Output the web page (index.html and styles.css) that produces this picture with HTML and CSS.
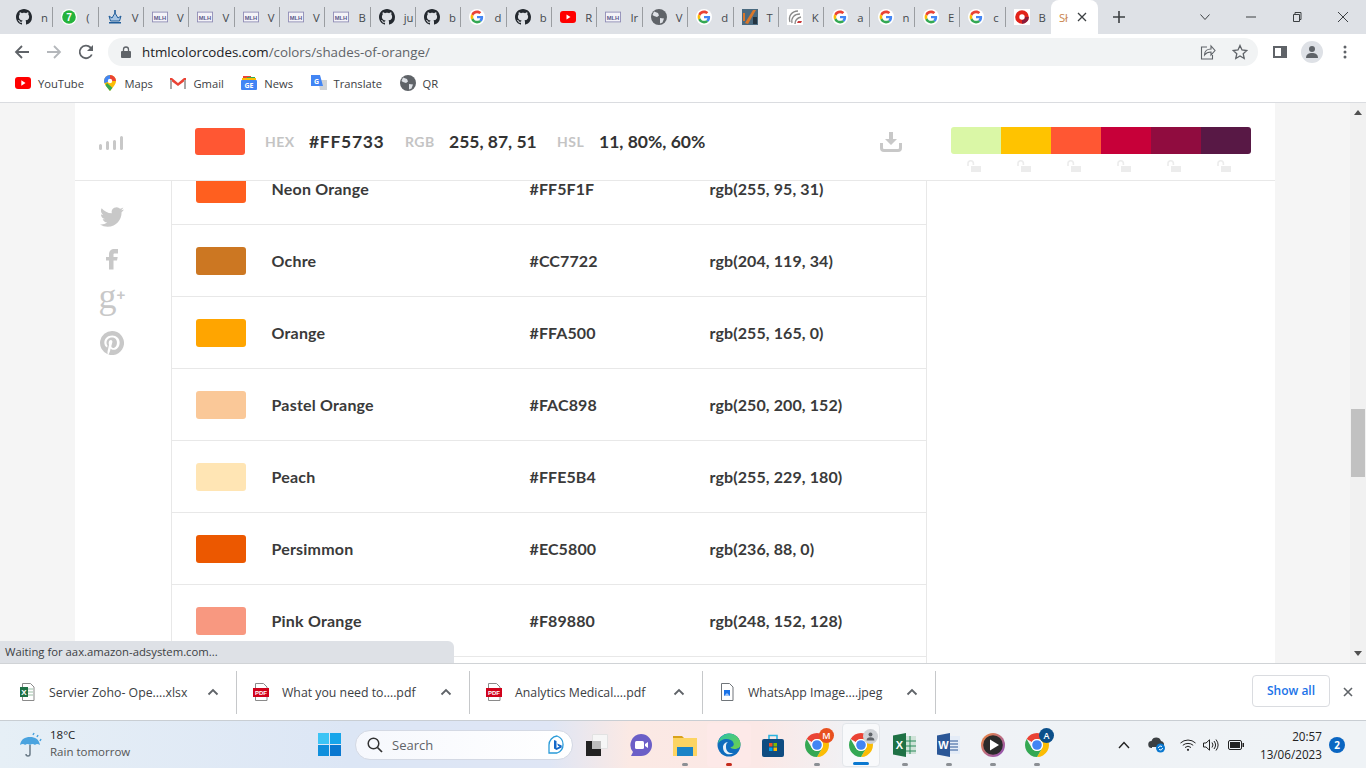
FILE: index.html
```html
<!DOCTYPE html>
<html lang="en">
<head>
    <meta charset="UTF-8">
    <title>Shades of Orange</title>
    <link rel="stylesheet" href="styles.css">
</head>
<body>
    <svg class="sprite" xmlns="http://www.w3.org/2000/svg">
        <symbol id="i-github" viewBox="0 0 16 16"><path fill="#24292f" d="M8 0C3.58 0 0 3.58 0 8c0 3.54 2.29 6.53 5.47 7.59.4.07.55-.17.55-.38 0-.19-.01-.82-.01-1.49-2.01.37-2.53-.49-2.69-.94-.09-.23-.48-.94-.82-1.13-.28-.15-.68-.52-.01-.53.63-.01 1.08.58 1.23.82.72 1.21 1.87.87 2.33.66.07-.52.28-.87.51-1.07-1.78-.2-3.64-.89-3.64-3.95 0-.87.31-1.59.82-2.15-.08-.2-.36-1.02.08-2.12 0 0 .67-.21 2.2.82.64-.18 1.32-.27 2-.27.68 0 1.36.09 2 .27 1.53-1.04 2.2-.82 2.2-.82.44 1.1.16 1.92.08 2.12.51.56.82 1.27.82 2.15 0 3.07-1.87 3.75-3.65 3.95.29.25.54.73.54 1.48 0 1.07-.01 1.93-.01 2.2 0 .21.15.46.55.38A8.013 8.013 0 0016 8c0-4.42-3.58-8-8-8z"/></symbol>
        <symbol id="i-google" viewBox="-6 -6 60 60"><circle cx="24" cy="24" r="30" fill="#fff"/><path fill="#EA4335" d="M24 9.5c3.54 0 6.71 1.22 9.21 3.6l6.85-6.85C35.9 2.38 30.47 0 24 0 14.62 0 6.51 5.38 2.56 13.22l7.98 6.19C12.43 13.72 17.74 9.5 24 9.5z"/><path fill="#4285F4" d="M46.98 24.55c0-1.57-.15-3.09-.38-4.55H24v9.02h12.94c-.58 2.96-2.26 5.48-4.78 7.18l7.73 6c4.51-4.18 7.09-10.36 7.09-17.65z"/><path fill="#FBBC05" d="M10.53 28.59c-.48-1.45-.76-2.99-.76-4.59s.27-3.14.76-4.59l-7.98-6.19C.92 16.46 0 20.12 0 24c0 3.88.92 7.54 2.56 10.78l7.97-6.19z"/><path fill="#34A853" d="M24 48c6.48 0 11.93-2.13 15.89-5.81l-7.73-6c-2.15 1.45-4.92 2.3-8.16 2.3-6.26 0-11.57-4.22-13.47-9.91l-7.98 6.19C6.51 42.62 14.62 48 24 48z"/></symbol>
        <symbol id="i-mlh" viewBox="0 0 18 14"><rect x=".5" y="1.5" width="17" height="11" fill="#f4f3f8" stroke="#8f8cb5"/><text x="9" y="10" text-anchor="middle" class="mlh-text">MLH</text></symbol>
        <symbol id="i-globe" viewBox="0 0 16 16"><circle cx="8" cy="8" r="8" fill="#5f6368"/><path fill="#dee1e6" d="M3 2.5l4 1.5 1 2.5-2 1.5-3-1-1.5-1zM9 9l4 .5-1.5 4-2.5 1z"/></symbol>
        <symbol id="i-chrome" viewBox="2 2 20 20"><path fill="#ea4335" d="M3.34 7A10 10 0 0120.66 7H12a5 5 0 00-4.33 2.5z"/><path fill="#fbbc04" d="M20.66 7A10 10 0 0112 22l4.33-7.5A5 5 0 0012 7z"/><path fill="#34a853" d="M12 22A10 10 0 013.34 7l4.33 7.5a5 5 0 008.66 0z"/><circle cx="12" cy="12" r="5" fill="#fff"/><circle cx="12" cy="12" r="4" fill="#4285f4"/></symbol>
        <symbol id="i-pdf" viewBox="0 0 16 18"><path fill="#fff" stroke="#8a8a8a" d="M2.5.5h8L14 4v13.5H2.5z"/><rect y="5" width="16" height="9" fill="#d0021b"/><text x="8" y="12.3" text-anchor="middle" class="pdf-text">PDF</text></symbol>
        <symbol id="i-up" viewBox="0 0 12 8"><path fill="none" stroke="#5f6368" stroke-width="1.8" d="M1.5 6.5L6 2l4.5 4.5"/></symbol>
        <symbol id="i-lock" viewBox="0 0 14 12"><path fill="none" stroke="#ececec" stroke-width="1.6" d="M1 6V3.5a2.7 2.7 0 015.4 0V5"/><rect x="4" y="6" width="10" height="6" fill="#ececec"/></symbol>
    </svg>

    <div class="tabstrip">
        <div class="tab"><svg class="fav"><use href="#i-github"/></svg><span class="tab-title">n</span></div>
        <div class="tab">
            <svg class="fav" viewBox="0 0 16 16"><circle cx="8" cy="8" r="8" fill="#fff"/><circle cx="8" cy="8" r="6.8" fill="#25b33c"/><text x="8" y="11.5" text-anchor="middle" class="fav-num">7</text></svg>
            <span class="tab-title">(</span>
        </div>
        <div class="tab">
            <svg class="fav" viewBox="0 0 16 16"><path fill="#a9c6e4" stroke="#1f5c99" d="M2 7l3 2 3-5 3 5 3-2-1.5 5h-9z"/><path fill="#1f5c99" d="M2 13h12v1.5H2zM7.2 1h1.6v3H7.2z"/></svg>
            <span class="tab-title">V</span>
        </div>
        <div class="tab"><svg class="fav"><use href="#i-mlh"/></svg><span class="tab-title">V</span></div>
        <div class="tab"><svg class="fav"><use href="#i-mlh"/></svg><span class="tab-title">V</span></div>
        <div class="tab"><svg class="fav"><use href="#i-mlh"/></svg><span class="tab-title">V</span></div>
        <div class="tab"><svg class="fav"><use href="#i-mlh"/></svg><span class="tab-title">V</span></div>
        <div class="tab"><svg class="fav"><use href="#i-mlh"/></svg><span class="tab-title">B</span></div>
        <div class="tab"><svg class="fav"><use href="#i-github"/></svg><span class="tab-title">ju</span></div>
        <div class="tab"><svg class="fav"><use href="#i-github"/></svg><span class="tab-title">b</span></div>
        <div class="tab"><svg class="fav"><use href="#i-google"/></svg><span class="tab-title">d</span></div>
        <div class="tab"><svg class="fav"><use href="#i-github"/></svg><span class="tab-title">b</span></div>
        <div class="tab">
            <svg class="fav" viewBox="0 0 16 16"><rect y="2" width="16" height="12" rx="3" fill="#f00"/><path fill="#fff" d="M6.5 5.5l4 2.5-4 2.5z"/></svg>
            <span class="tab-title">R</span>
        </div>
        <div class="tab"><svg class="fav"><use href="#i-mlh"/></svg><span class="tab-title">Ir</span></div>
        <div class="tab"><svg class="fav"><use href="#i-globe"/></svg><span class="tab-title">V</span></div>
        <div class="tab"><svg class="fav"><use href="#i-google"/></svg><span class="tab-title">d</span></div>
        <div class="tab">
            <svg class="fav" viewBox="0 0 16 16"><rect width="16" height="16" fill="#4a6a80"/><path fill="#d9772a" d="M3 14L11 1h3L6 15zM1 4h2v8H1z"/><path fill="#243440" d="M11 8h4v7h-4z"/></svg>
            <span class="tab-title">T</span>
        </div>
        <div class="tab">
            <svg class="fav" viewBox="0 0 16 16"><rect width="16" height="16" fill="#fff"/><path fill="none" stroke="#8a8a8a" stroke-width="1.3" d="M3 13C1 7 5 2 11 2M5 14C4 9 7 5 13 5M8 15c0-4 2-6 6-7"/><path fill="#c8393a" d="M10 14h4l1-2h-4z"/></svg>
            <span class="tab-title">K</span>
        </div>
        <div class="tab"><svg class="fav"><use href="#i-google"/></svg><span class="tab-title">a</span></div>
        <div class="tab"><svg class="fav"><use href="#i-google"/></svg><span class="tab-title">n</span></div>
        <div class="tab"><svg class="fav"><use href="#i-google"/></svg><span class="tab-title">E</span></div>
        <div class="tab"><svg class="fav"><use href="#i-google"/></svg><span class="tab-title">c</span></div>
        <div class="tab tab-plain">
            <svg class="fav" viewBox="0 0 16 16"><rect width="16" height="16" fill="#fff"/><circle cx="8" cy="8" r="6.8" fill="#e2231a"/><path fill="#8a1c3c" d="M8 14.8A6.8 6.8 0 0014.8 8H11a3 3 0 01-3 3z"/><circle cx="8" cy="8" r="2.7" fill="#fff"/></svg>
            <span class="tab-title">B</span>
        </div>
        <div class="tab-active">
            <span class="tab-title active-title">Sł</span>
            <svg class="tab-close" viewBox="0 0 10 10"><path stroke="#3c4043" stroke-width="1.3" d="M1 1l8 8M9 1L1 9"/></svg>
        </div>
        <svg class="new-tab" viewBox="0 0 12 12"><path stroke="#3c4043" stroke-width="1.6" d="M6 0v12M0 6h12"/></svg>
        <div class="win-controls">
            <svg viewBox="0 0 10 6" class="win-v"><path fill="none" stroke="#3c4043" d="M.5.5L5 5.5 9.5.5"/></svg>
            <svg viewBox="0 0 10 10" class="win-btn"><path stroke="#3c4043" d="M0 5h10"/></svg>
            <svg viewBox="0 0 10 10" class="win-btn"><path fill="none" stroke="#3c4043" d="M1.5 2.5h6v7h-6zM3 2.5V.5h6v7H7.5"/></svg>
            <svg viewBox="0 0 10 10" class="win-btn"><path stroke="#3c4043" d="M0 0l10 10M10 0L0 10"/></svg>
        </div>
    </div>

    <div class="toolbar">
        <svg class="nav-icon" viewBox="0 0 16 16"><path fill="none" stroke="#5f6368" stroke-width="1.8" d="M15 8H2M8 2L2 8l6 6"/></svg>
        <svg class="nav-icon" viewBox="0 0 16 16"><path fill="none" stroke="#b4b7bb" stroke-width="1.8" d="M1 8h13M8 2l6 6-6 6"/></svg>
        <svg class="nav-icon" viewBox="0 0 16 16"><path fill="none" stroke="#5f6368" stroke-width="1.8" d="M13.8 10.5A6.3 6.3 0 1112.5 3.5L14 5"/><path fill="#5f6368" d="M15 1v6H9z"/></svg>
        <div class="omnibox">
            <svg class="lock" viewBox="0 0 10 12"><path fill="none" stroke="#5f6368" stroke-width="1.3" d="M2.5 5V3.5a2.5 2.5 0 015 0V5"/><rect y="5" width="10" height="7" rx="1" fill="#5f6368"/></svg>
            <span class="url"><span class="url-host">htmlcolorcodes.com</span>/colors/shades-of-orange/</span>
            <svg class="omni-icon share" viewBox="0 0 16 16"><path fill="none" stroke="#5f6368" stroke-width="1.1" d="M7 3H1.5v12h11v-4M4.5 11c0-4 3-6 6.5-6V2l4 4.5L11 11V8c-3 0-5 1-6.5 3z"/></svg>
            <svg class="omni-icon star" viewBox="0 0 16 16"><path fill="none" stroke="#5f6368" stroke-width="1.3" d="M8 1.5l2 4.5 4.8.5-3.6 3.2 1 4.8L8 12l-4.2 2.5 1-4.8-3.600-3.200L6 6z"/></svg>
        </div>
        <svg class="side-panel" viewBox="0 0 14 14"><path fill="#5f6368" d="M0 1h14v12H0zM2 3v8h6V3z"/></svg>
        <div class="profile">
            <svg viewBox="0 0 14 14"><circle cx="7" cy="4" r="3" fill="#5f6368"/><path fill="#5f6368" d="M1 13c0-4 3-5 6-5s6 1 6 5z"/></svg>
        </div>
        <svg class="menu-dots" viewBox="0 0 4 14"><circle cx="2" cy="2" r="1.5" fill="#5f6368"/><circle cx="2" cy="7" r="1.5" fill="#5f6368"/><circle cx="2" cy="12" r="1.5" fill="#5f6368"/></svg>
    </div>

    <div class="bookmarks">
        <div class="bookmark">
            <svg viewBox="0 0 16 12"><rect width="16" height="12" rx="3" fill="#f00"/><path fill="#fff" d="M6.3 3.3L10.5 6 6.3 8.7z"/></svg>
            <span>YouTube</span>
        </div>
        <div class="bookmark">
            <svg viewBox="-2 0 16 16"><clipPath id="pin-clip"><path d="M6 0a6 6 0 00-6 6c0 3.5 3.5 6.5 6 10 2.5-3.5 6-6.5 6-10a6 6 0 00-6-6z"/></clipPath><g clip-path="url(#pin-clip)"><path fill="#fbbc04" d="M0 0h12v16H0z"/><path fill="#ea4335" d="M6 0h6v6H6z"/><path fill="#4285f4" d="M0 0h6v6L0 8.5z"/><path fill="#34a853" d="M0 16h12L3 8 0 12z"/></g><circle cx="6" cy="6" r="2.2" fill="#fff"/></svg>
            <span>Maps</span>
        </div>
        <div class="bookmark">
            <svg viewBox="0 0 16 12"><path fill="#ea4335" d="M0 1h2l6 5 6-5h2v2L8 9 0 3z"/><path fill="#a8a8a8" d="M0 3h2v9H0zM14 3h2v9h-2z"/></svg>
            <span>Gmail</span>
        </div>
        <div class="bookmark">
            <svg viewBox="0 0 16 14"><path fill="#ea4335" d="M2 0h8v4H2z"/><path fill="#34a853" d="M6 1h8v4H6z"/><path fill="#fbbc04" d="M1 2h14v3H1z"/><rect y="4" width="16" height="10" rx="1" fill="#4285f4"/><text x="8" y="12" text-anchor="middle" class="news-text">GE</text></svg>
            <span>News</span>
        </div>
        <div class="bookmark">
            <svg viewBox="0 0 16 16"><path fill="#d0d3d6" d="M7 5h9v10H9z"/><path fill="#4285f4" d="M0 0h9l3 11H0z"/><text x="5.5" y="8.5" text-anchor="middle" class="translate-text">G</text></svg>
            <span>Translate</span>
        </div>
        <div class="bookmark">
            <svg viewBox="0 0 16 16"><use href="#i-globe"/></svg>
            <span>QR</span>
        </div>
    </div>

    <div class="viewport">
        <div class="gutter"></div>
        <div class="page">
            <div class="colorbar">
                <svg class="bars" viewBox="0 0 25 14"><path stroke="#c8c8c8" stroke-width="3" stroke-linecap="round" d="M1.5 12.5v-3M8.5 12.5v-6M15.5 12.5v-7M22.5 12.5V1.5"/></svg>
                <div class="current-swatch"></div>
                <span class="bar-label bar-label-first">HEX</span><span class="bar-value bar-hex">#FF5733</span>
                <span class="bar-label">RGB</span><span class="bar-value bar-rgb">255, 87, 51</span>
                <span class="bar-label">HSL</span><span class="bar-value bar-hsl">11, 80%, 60%</span>
                <svg class="download" viewBox="0 0 22 20"><path fill="#c8c8c8" d="M9 0h4v7h4l-6 6-6-6h4z"/><path fill="none" stroke="#c8c8c8" stroke-width="3" d="M1.5 11v5A2.5 2.5 0 004 18.5h14a2.5 2.5 0 002.5-2.5v-5"/></svg>
                <div class="palette">
                    <div class="palette-col"><div class="chip chip-1"></div><svg class="lock-open"><use href="#i-lock"/></svg></div>
                    <div class="palette-col"><div class="chip chip-2"></div><svg class="lock-open"><use href="#i-lock"/></svg></div>
                    <div class="palette-col"><div class="chip chip-3"></div><svg class="lock-open"><use href="#i-lock"/></svg></div>
                    <div class="palette-col"><div class="chip chip-4"></div><svg class="lock-open"><use href="#i-lock"/></svg></div>
                    <div class="palette-col"><div class="chip chip-5"></div><svg class="lock-open"><use href="#i-lock"/></svg></div>
                    <div class="palette-col"><div class="chip chip-6"></div><svg class="lock-open"><use href="#i-lock"/></svg></div>
                </div>
            </div>
            <div class="page-body">
                <div class="share-col">
                    <div class="share-item"><svg class="share-svg" viewBox="0 0 24 24"><path fill="#c8c8c8" d="M23.95 4.57a10 10 0 01-2.82.77 4.96 4.96 0 002.16-2.72c-.95.55-2 .96-3.13 1.2a4.92 4.92 0 00-8.38 4.48C7.69 8.1 4.07 6.13 1.64 3.16a4.82 4.82 0 00-.67 2.48c0 1.71.87 3.21 2.19 4.1a4.9 4.9 0 01-2.23-.61v.06c0 2.39 1.7 4.38 3.95 4.83a5 5 0 01-2.21.08 4.94 4.94 0 004.6 3.42A9.87 9.87 0 010 19.54a14 14 0 007.56 2.21c9.05 0 14-7.5 14-13.98 0-.21 0-.42-.02-.63a9.94 9.94 0 002.46-2.55z"/></svg></div>
                    <div class="share-item"><svg class="share-f" viewBox="6 3 12 21"><path fill="#c8c8c8" d="M14.5 8H18V3.5h-3.5C11 3.5 9 5.5 9 9v2.5H6V15h3v9h4.5v-9H17l.7-3.5h-4.2V9c0-.6.4-1 1-1z"/></svg></div>
                    <div class="share-item share-gplus">g<span class="gplus-mark">+</span></div>
                    <div class="share-item"><svg class="share-svg" viewBox="0 0 24 24"><path fill="#c8c8c8" d="M12 0a12 12 0 00-4.37 23.17c-.1-.95-.2-2.4.04-3.44l1.4-5.96s-.36-.72-.36-1.78c0-1.67.97-2.92 2.17-2.92 1.02 0 1.52.77 1.52 1.69 0 1.03-.65 2.56-1 3.98-.28 1.19.6 2.16 1.77 2.16 2.13 0 3.76-2.24 3.76-5.48 0-2.86-2.06-4.87-5-4.87-3.4 0-5.4 2.55-5.4 5.2 0 1.02.39 2.13.89 2.73.1.12.11.22.08.34l-.33 1.36c-.05.22-.18.27-.4.16-1.5-.7-2.43-2.88-2.43-4.64 0-3.78 2.75-7.25 7.92-7.25 4.16 0 7.4 2.96 7.4 6.93 0 4.13-2.6 7.46-6.22 7.46-1.21 0-2.36-.63-2.75-1.38l-.75 2.85c-.27 1.04-1 2.35-1.49 3.14A12 12 0 1012 0z"/></svg></div>
                </div>
                <div class="color-table">
                    <div class="color-rows">
                        <div class="color-row"><div class="swatch c-neon"></div><span class="c-name">Neon Orange</span><span class="c-hex">#FF5F1F</span><span class="c-rgb">rgb(255, 95, 31)</span></div>
                        <div class="color-row"><div class="swatch c-ochre"></div><span class="c-name">Ochre</span><span class="c-hex">#CC7722</span><span class="c-rgb">rgb(204, 119, 34)</span></div>
                        <div class="color-row"><div class="swatch c-orange"></div><span class="c-name">Orange</span><span class="c-hex">#FFA500</span><span class="c-rgb">rgb(255, 165, 0)</span></div>
                        <div class="color-row"><div class="swatch c-pastel"></div><span class="c-name">Pastel Orange</span><span class="c-hex">#FAC898</span><span class="c-rgb">rgb(250, 200, 152)</span></div>
                        <div class="color-row"><div class="swatch c-peach"></div><span class="c-name">Peach</span><span class="c-hex">#FFE5B4</span><span class="c-rgb">rgb(255, 229, 180)</span></div>
                        <div class="color-row"><div class="swatch c-persimmon"></div><span class="c-name">Persimmon</span><span class="c-hex">#EC5800</span><span class="c-rgb">rgb(236, 88, 0)</span></div>
                        <div class="color-row"><div class="swatch c-pink"></div><span class="c-name">Pink Orange</span><span class="c-hex">#F89880</span><span class="c-rgb">rgb(248, 152, 128)</span></div>
                    </div>
                </div>
            </div>
        </div>
        <div class="gutter gutter-right"></div>
        <div class="scrollbar">
            <svg class="scroll-arrow" viewBox="0 0 8 5"><path fill="#505050" d="M4 0l4 5H0z"/></svg>
            <div class="scroll-thumb"></div>
            <svg class="scroll-arrow scroll-arrow-down" viewBox="0 0 8 5"><path fill="#505050" d="M4 5L0 0h8z"/></svg>
        </div>
        <div class="status-bubble">Waiting for aax.amazon-adsystem.com...</div>
    </div>

    <div class="downloads">
        <div class="dl-item dl-first">
            <svg class="dl-icon" viewBox="0 0 16 18"><path fill="#fff" stroke="#8a8a8a" d="M2.5.5h8L14 4v13.5H2.5z"/><path stroke="#9cbfa6" d="M8 6h5M8 9h5M8 12h5"/><rect y="4" width="8" height="10" fill="#1e7145"/><text x="4" y="12" text-anchor="middle" class="xl-text">X</text></svg>
            <span class="dl-name">Servier Zoho- Ope....xlsx</span>
            <svg class="dl-chevron"><use href="#i-up"/></svg>
        </div>
        <div class="dl-item">
            <svg class="dl-icon"><use href="#i-pdf"/></svg>
            <span class="dl-name">What you need to....pdf</span>
            <svg class="dl-chevron"><use href="#i-up"/></svg>
        </div>
        <div class="dl-item">
            <svg class="dl-icon"><use href="#i-pdf"/></svg>
            <span class="dl-name">Analytics Medical....pdf</span>
            <svg class="dl-chevron"><use href="#i-up"/></svg>
        </div>
        <div class="dl-item">
            <svg class="dl-icon" viewBox="0 0 16 18"><path fill="#fff" stroke="#70757a" d="M2.5.5h8L14 4v13.5H2.5z"/><rect x="5" y="7" width="6" height="6" fill="#1a73e8"/><path fill="#9fc5f8" d="M5 13l3-3 3 3z"/></svg>
            <span class="dl-name">WhatsApp Image....jpeg</span>
            <svg class="dl-chevron"><use href="#i-up"/></svg>
        </div>
        <div class="show-all">Show all</div>
        <svg class="dl-close" viewBox="0 0 10 10"><path stroke="#5f6368" stroke-width="1.6" d="M1 1l8 8M9 1L1 9"/></svg>
    </div>

    <div class="taskbar">
        <div class="weather">
            <svg class="weather-icon" viewBox="0 0 24 26"><path fill="#4aa3df" d="M1 13C2 7 6 5 11 5s9 2 10 8c-2-1.5-4-1.5-5 0-1.5-1.5-3.5-1.5-5 0-1.5-1.5-3.5-1.5-5 0-1-1.5-3-1.5-5 0z"/><path fill="none" stroke="#6b7b88" stroke-width="1.5" d="M11 13v9a2 2 0 01-4 0"/><path stroke="#4aa3df" stroke-width="1.5" d="M14 3l1-2M18 5l1-2M21 9l1-2"/></svg>
            <div class="weather-text"><span class="temp">18°C</span><span class="forecast">Rain tomorrow</span></div>
        </div>
        <div class="task-slot">
            <svg class="win-logo" viewBox="0 0 23 23"><path fill="#3cc4f5" d="M0 0h11v11H0z"/><path fill="#17a5ea" d="M12 0h11v11H12z"/><path fill="#0f8fdc" d="M0 12h11v11H0z"/><path fill="#0a78d0" d="M12 12h11v11H12z"/></svg>
        </div>
        <div class="search-pill">
            <svg class="search-icon" viewBox="0 0 16 16"><circle cx="6.5" cy="6.5" r="5.3" fill="none" stroke="#333" stroke-width="1.5"/><path stroke="#333" stroke-width="1.7" d="M10.5 10.5L15 15"/></svg>
            <span class="search-text">Search</span>
            <svg class="bing" viewBox="0 0 20 20"><path fill="#fff" stroke="#2a9bd8" stroke-width="1.3" d="M10 1a9 9 0 010 17H2V10a9 9 0 018-9z"/><path fill="#1467c8" d="M7 5l2.5 1v7l3-1.5-1.5-.8-.8-2.2 4.500 2v2L9.500 15 7 13.500z"/></svg>
        </div>
        <div class="task-slot">
            <svg class="task-icon" viewBox="0 0 24 24"><path fill="#f6f6f6" stroke="#e2e2e2" d="M7.5 1.5h15v14h-15z"/><path fill="#222" d="M1 8h15v15H1z"/><path fill="#bdbdbd" d="M7 8h9v8H7z"/></svg>
        </div>
        <div class="task-slot">
            <svg class="task-icon" viewBox="0 0 24 24"><path fill="#6b5fc7" d="M12 1a11 11 0 110 22H2l2-4a11 11 0 018-18z"/><rect x="6" y="8" width="9" height="8" rx="1.5" fill="#fff"/><path fill="#fff" d="M16 11l3-2v6l-3-2z"/></svg>
        </div>
        <div class="task-slot has-dot">
            <svg class="task-icon" viewBox="0 0 24 24"><path fill="#d9a21b" d="M0 3h9l2 2H0z"/><path fill="#fcd462" d="M0 5h24v18H0z"/><path fill="#1a84c7" d="M4 14h16v9H4z"/></svg>
        </div>
        <div class="task-slot has-dot dot-red tile-edge">
            <svg class="task-icon" viewBox="0 0 24 24"><defs><linearGradient id="edge-g" x1="0" y1="0" x2="1" y2="1"><stop offset="0" stop-color="#2bc3a8"/><stop offset="1" stop-color="#6fd04a"/></linearGradient></defs><circle cx="12" cy="12" r="11.5" fill="#0f6cbd"/><path fill="url(#edge-g)" d="M1 11C2 4 7 .5 12 .5c6 0 11.5 4.5 11.5 11 0 3-3 4.5-6 4.5-2 0-4-1-4-2 2 0 4-1.5 3-4-1-3-4-4-7-4C6 6 2 8 1 11z"/><path fill="#fff" opacity=".9" d="M9 14c0 4 3 7 8 6-5 3-11 1-11-6 0-2 2-5 5-5-2 1-2 3-2 5z"/></svg>
        </div>
        <div class="task-slot">
            <svg class="task-icon" viewBox="0 0 24 24"><path fill="none" stroke="#2bb3e0" stroke-width="1.6" d="M8 6V2.5h8V6"/><rect x="1" y="6" width="22" height="18" rx="2" fill="#0f4c81"/><path fill="#f25022" d="M8 10h3.5v3.5H8z"/><path fill="#7fba00" d="M12.5 10H16v3.5h-3.5z"/><path fill="#00a4ef" d="M8 14.5h3.5V18H8z"/><path fill="#ffb900" d="M12.5 14.5H16V18h-3.5z"/></svg>
        </div>
        <div class="task-slot has-dot">
            <svg class="task-icon"><use href="#i-chrome"/></svg>
            <span class="badge badge-m">M</span>
        </div>
        <div class="task-slot has-dot dot-active tile-active">
            <svg class="task-icon"><use href="#i-chrome"/></svg>
            <span class="badge badge-user"><svg viewBox="0 0 14 14"><circle cx="7" cy="4.5" r="2.5" fill="#5f6368"/><path fill="#5f6368" d="M2 12c0-3 2-4 5-4s5 1 5 4z"/></svg></span>
        </div>
        <div class="task-slot has-dot">
            <svg class="task-icon" viewBox="0 0 24 24"><path fill="#cfe3d8" d="M11 3h12v18H11z"/><path stroke="#2a8a5a" d="M11 8h12M11 13h12M11 18h12M17 3v18"/><path fill="#1e7145" d="M0 2.5L13 0v24L0 21.5z"/><text x="6.5" y="16" text-anchor="middle" class="office-text">X</text></svg>
        </div>
        <div class="task-slot has-dot">
            <svg class="task-icon" viewBox="0 0 24 24"><path fill="#e4ecf7" d="M11 3h12v18H11z"/><path stroke="#2b5797" d="M13 8h8M13 11h8M13 14h8M13 17h8"/><path fill="#2b5797" d="M0 2.5L13 0v24L0 21.5z"/><text x="6.5" y="16" text-anchor="middle" class="office-text">W</text></svg>
        </div>
        <div class="task-slot has-dot">
            <svg class="task-icon" viewBox="0 0 24 24"><defs><linearGradient id="player-g" x1="0" y1="0" x2="1" y2="1"><stop offset="0" stop-color="#f08a3c"/><stop offset="1" stop-color="#8a4fc0"/></linearGradient></defs><circle cx="12" cy="12" r="12" fill="url(#player-g)"/><circle cx="12" cy="12" r="9.8" fill="#2b2b2b"/><path fill="#fff" d="M9 6.5l9 5.5-9 5.5z"/></svg>
        </div>
        <div class="task-slot has-dot">
            <svg class="task-icon"><use href="#i-chrome"/></svg>
            <span class="badge badge-a">A</span>
        </div>
        <div class="tray">
            <svg class="tray-up" viewBox="0 0 12 8"><path fill="none" stroke="#222" stroke-width="1.4" d="M1 7l5-5.5L11 7"/></svg>
            <svg class="tray-cloud" viewBox="0 0 18 16"><path fill="#3c4043" d="M4 11a3.5 3.5 0 01-.5-7A5 5 0 0113 4a3.5 3.5 0 012 6H4z"/><circle cx="12.5" cy="11" r="4.5" fill="#0a78d0"/><path fill="none" stroke="#fff" d="M10.5 11a2 2 0 013.5-1.3M14.5 11a2 2 0 01-3.5 1.3"/></svg>
            <svg class="tray-wifi" viewBox="0 0 16 12"><path fill="none" stroke="#222" d="M.5 4a11 11 0 0115 0M2.8 6.3a8 8 0 0110.4 0M5 8.500a4.500 4.500 0 016 0"/><circle cx="8" cy="10.8" r="1.1" fill="#222"/></svg>
            <svg class="tray-vol" viewBox="0 0 16 12"><path fill="none" stroke="#222" d="M.5 4H3l3.5-3.2v10.400L3 8H.5zM9 3.500a4 4 0 010 5M11 2a6.500 6.500 0 010 8M13 .5a9 9 0 010 11"/></svg>
            <svg class="tray-bat" viewBox="0 0 16 10"><rect x=".5" y=".5" width="13" height="9" rx="1.5" fill="none" stroke="#222"/><rect x="2" y="2" width="10" height="6" fill="#222"/><path fill="#222" d="M14.5 3H16v4h-1.5z"/></svg>
            <div class="clock"><span>20:57</span><span>13/06/2023</span></div>
            <span class="notif">2</span>
        </div>
    </div>
</body>
</html>
```

FILE: styles.css
```css
* {
    margin: 0;
    padding: 0;
    box-sizing: border-box;
}

body {
    width: 1366px;
    height: 768px;
    overflow: hidden;
    font-family: "Open Sans", "Noto Sans", sans-serif;
    font-size: 11.3px;
    color: #3c4043;
    background: #fff;
    display: flex;
    flex-direction: column;
}

.sprite {
    display: none;
}

/* chrome tab strip */
.tabstrip {
    height: 34px;
    flex: none;
    background: #dee1e6;
    display: flex;
    align-items: center;
    padding-left: 8px;
}

.tab {
    width: 45.35px;
    height: 20px;
    flex: none;
    display: flex;
    align-items: center;
    gap: 9px;
    padding-left: 8px;
    border-right: 1px solid #9a9da1;
    overflow: hidden;
}

.tab-plain {
    border-right: none;
}

.fav {
    width: 16px;
    height: 16px;
    flex: none;
}

.tab-title {
    font-size: 11.3px;
    color: #45494e;
    white-space: nowrap;
}

.tab-active {
    width: 47px;
    height: 34px;
    flex: none;
    background: #fff;
    border-radius: 8px 8px 0 0;
    display: flex;
    align-items: center;
    padding-left: 8px;
    gap: 7px;
}

.active-title {
    color: #c9834a;
    width: 11px;
    overflow: hidden;
}

.tab-close {
    width: 10px;
    height: 10px;
}

.new-tab {
    width: 12px;
    height: 12px;
    flex: none;
    margin-left: 15px;
}

.win-controls {
    margin-left: auto;
    flex: none;
    display: flex;
    align-items: center;
    width: 166px;
}

.win-v {
    width: 10px;
    height: 6px;
    flex: none;
    margin-right: 36px;
}

.win-btn {
    width: 10px;
    height: 10px;
    flex: none;
    margin-right: 36px;
}

/* address bar */
.toolbar {
    height: 34px;
    flex: none;
    background: #fff;
    display: flex;
    align-items: center;
    padding-left: 14px;
    padding-top: 2px;
}

.nav-icon {
    width: 16px;
    height: 16px;
    margin-right: 16px;
}

.omnibox {
    width: 1150px;
    height: 28px;
    margin-left: -2px;
    background: #f1f3f4;
    border-radius: 14px;
    display: flex;
    align-items: center;
    padding-left: 13px;
}

.lock {
    width: 10px;
    height: 12px;
    margin-right: 11px;
}

.url {
    font-size: 13.35px;
    color: #5f6368;
}

.url-host {
    color: #202124;
}

.omni-icon {
    width: 16px;
    height: 16px;
}

.share {
    margin-left: auto;
}

.star {
    margin-left: 16px;
    margin-right: 10px;
}

.side-panel {
    width: 14px;
    height: 14px;
    margin-left: 15px;
}

.profile {
    width: 22px;
    height: 22px;
    margin-left: 14px;
    background: #dee1e6;
    border-radius: 50%;
    display: flex;
    align-items: center;
    justify-content: center;
}

.profile svg {
    width: 14px;
    height: 14px;
}

.menu-dots {
    width: 4px;
    height: 14px;
    margin-left: 20px;
}

/* bookmarks */
.bookmarks {
    height: 34px;
    flex: none;
    background: #fff;
    display: flex;
    align-items: center;
    padding-left: 15px;
    padding-bottom: 4px;
    gap: 17.5px;
}

.bookmark {
    display: flex;
    align-items: center;
    gap: 7px;
    color: #3c4043;
    font-size: 11.2px;
}

.bookmark svg {
    width: 16px;
    height: 16px;
}

.news-text,
.translate-text {
    font-family: "Open Sans", sans-serif;
    font-size: 7px;
    font-weight: 700;
    fill: #fff;
}

.mlh-text {
    font-family: "Liberation Sans", sans-serif;
    font-size: 6.5px;
    font-weight: 700;
    fill: #5c5a8c;
}

.fav-num {
    font-family: "Liberation Sans", sans-serif;
    font-size: 10px;
    font-weight: 700;
    fill: #fff;
}

/* the page in the browser */
.viewport {
    height: 561px;
    flex: none;
    display: flex;
    border-top: 1px solid #dadce0;
    position: relative;
}

.gutter {
    width: 75px;
    flex: none;
    background: #f5f5f5;
}

.page {
    width: 1200px;
    flex: none;
    background: #fff;
    display: flex;
    flex-direction: column;
    overflow: hidden;
    font-family: Lato, "Open Sans", sans-serif;
}

.colorbar {
    height: 78px;
    flex: none;
    border-bottom: 1px solid #e8e8e8;
    display: flex;
    align-items: center;
    padding-left: 24px;
}

.bars {
    width: 25px;
    height: 14px;
    flex: none;
    margin-top: 2px;
}

.current-swatch {
    width: 50px;
    height: 27px;
    flex: none;
    margin-left: 71px;
    background: #ff5733;
    border-radius: 3px;
}

.bar-label {
    width: 31px;
    flex: none;
    font-size: 14px;
    font-weight: 700;
    letter-spacing: .5px;
    color: #c4c4c4;
}

.bar-label-first {
    margin-left: 20px;
}

.bar-value {
    flex: none;
    font-size: 17.5px;
    font-weight: 700;
    color: #333;
    margin-left: 13px;
}

.bar-hex {
    width: 96px;
    letter-spacing: .7px;
}

.bar-rgb {
    width: 108px;
}

.bar-hsl {
    width: 281px;
    margin-left: 11px;
}

.download {
    width: 22px;
    height: 20px;
    flex: none;
}

.palette {
    display: flex;
    flex: none;
    margin-left: 49px;
    margin-top: 15px;
}

.palette-col {
    width: 50px;
    display: flex;
    flex-direction: column;
    align-items: center;
    gap: 6px;
}

.chip {
    width: 50px;
    height: 27px;
}

.palette-col:first-child .chip {
    border-radius: 3px 0 0 3px;
}

.palette-col:last-child .chip {
    border-radius: 0 3px 3px 0;
}

.chip-1 { background: #daf7a6; }
.chip-2 { background: #ffc300; }
.chip-3 { background: #ff5733; }
.chip-4 { background: #c70039; }
.chip-5 { background: #900c3f; }
.chip-6 { background: #581845; }

.lock-open {
    width: 14px;
    height: 12px;
    margin-right: 4px;
}

.page-body {
    flex: 1;
    display: flex;
    min-height: 0;
}

.share-col {
    width: 96px;
    flex: none;
    padding-top: 15px;
    padding-right: 22px;
    display: flex;
    flex-direction: column;
    align-items: center;
}

.share-item {
    height: 42px;
    flex: none;
    display: flex;
    align-items: center;
    justify-content: center;
}

.share-svg {
    width: 24px;
    height: 24px;
}

.share-f {
    width: 12px;
    height: 22px;
}

.share-gplus {
    font-family: "Liberation Serif", serif;
    font-size: 36px;
    color: #c8c8c8;
    line-height: 1;
    padding-bottom: 10px;
}

.gplus-mark {
    font-family: "Liberation Sans", sans-serif;
    font-size: 15px;
    font-weight: 700;
    margin-top: -4px;
}

.color-table {
    width: 756px;
    flex: none;
    border-left: 1px solid #e8e8e8;
    border-right: 1px solid #e8e8e8;
    overflow: hidden;
}

/* list is scrolled, the first row is cut by the sticky bar */
.color-rows {
    margin-top: -28px;
}

.color-row {
    height: 72px;
    border-bottom: 1px solid #e8e8e8;
    display: flex;
    align-items: center;
    padding-left: 24px;
    font-size: 16px;
    line-height: 14px;
    font-weight: 700;
    color: #3a3a3a;
}

.swatch {
    width: 50px;
    height: 28px;
    flex: none;
    border-radius: 3px;
    margin-right: 25.5px;
}

.c-neon { background: #ff5f1f; }
.c-ochre { background: #cc7722; }
.c-orange { background: #ffa500; }
.c-pastel { background: #fac898; }
.c-peach { background: #ffe5b4; }
.c-persimmon { background: #ec5800; }
.c-pink { background: #f89880; }

.c-name {
    width: 258px;
    letter-spacing: .2px;
}

.c-hex {
    width: 180px;
    letter-spacing: .1px;
}

.c-rgb {
    letter-spacing: .1px;
}

.gutter-right {
    width: 75px;
}

.scrollbar {
    width: 16px;
    flex: none;
    background: #f1f1f1;
    display: flex;
    flex-direction: column;
    align-items: center;
    padding-top: 7px;
    padding-bottom: 7px;
}

.scroll-arrow {
    width: 8px;
    height: 5px;
    flex: none;
}

.scroll-arrow-down {
    margin-top: auto;
}

.scroll-thumb {
    width: 14px;
    height: 68px;
    margin-top: 294px;
    background: #c1c1c1;
}

.status-bubble {
    position: absolute;
    left: 0;
    bottom: 0;
    width: 454px;
    height: 22px;
    background: #dee1e6;
    border-radius: 0 6px 0 0;
    padding-left: 5px;
    font-size: 11.3px;
    line-height: 22px;
    color: #3c4043;
}

/* download shelf */
.downloads {
    height: 57px;
    flex: none;
    background: #fff;
    border-top: 1px solid #d0d3d6;
    display: flex;
    align-items: center;
}

.dl-item {
    width: 233px;
    height: 43px;
    flex: none;
    border-right: 1px solid #c6c8ca;
    display: flex;
    align-items: center;
    padding-left: 16px;
}

.dl-first {
    width: 237px;
    padding-left: 20px;
}

.dl-icon {
    width: 16px;
    height: 18px;
    flex: none;
}

.dl-name {
    width: 158px;
    margin-left: 13px;
    font-size: 12.3px;
    color: #3c4043;
    white-space: nowrap;
}

.dl-chevron {
    width: 12px;
    height: 8px;
}

.pdf-text,
.xl-text {
    font-family: "Liberation Sans", sans-serif;
    font-size: 6px;
    font-weight: 700;
    fill: #fff;
}

.xl-text {
    font-size: 8px;
}

.show-all {
    width: 78px;
    height: 32px;
    margin-left: auto;
    margin-top: -2px;
    border: 1px solid #dadce0;
    border-radius: 4px;
    color: #1a73e8;
    text-align: center;
    line-height: 30px;
    font-weight: 600;
    font-size: 12px;
}

.dl-close {
    width: 10px;
    height: 10px;
    margin-left: 13px;
    margin-right: 13px;
}

/* windows taskbar */
.taskbar {
    height: 48px;
    flex: none;
    border-top: 1px solid #c9ced3;
    background: linear-gradient(90deg, #e6eff6 0, #dce6f5 350px, #dfe6f5 550px, #fbe9e4 630px, #fbe8e6 760px, #eff2f6 860px, #eff3f6 100%);
    display: flex;
    align-items: center;
}

.weather {
    width: 307px;
    flex: none;
    display: flex;
    align-items: center;
    padding-left: 19px;
    gap: 7px;
}

.weather-icon {
    width: 24px;
    height: 26px;
}

.weather-text {
    display: flex;
    flex-direction: column;
    margin-top: -3px;
    font-size: 11.5px;
    line-height: 17px;
}

.temp {
    color: #222;
}

.forecast {
    color: #555;
}

.task-slot {
    width: 44px;
    height: 44px;
    flex: none;
    display: flex;
    align-items: center;
    justify-content: center;
    position: relative;
}

.win-logo {
    width: 23px;
    height: 23px;
}

.search-pill {
    width: 218px;
    height: 30px;
    flex: none;
    margin-left: 4px;
    margin-right: 2px;
    background: linear-gradient(90deg, #f6f8fd, #fff);
    border: 1px solid #d4d9e4;
    border-radius: 15px;
    display: flex;
    align-items: center;
    padding-left: 11px;
}

.search-icon {
    width: 16px;
    height: 16px;
}

.search-text {
    margin-left: 9px;
    font-size: 13px;
    color: #5f6368;
}

.bing {
    width: 20px;
    height: 20px;
    margin-left: auto;
    margin-right: 5px;
}

.task-icon {
    width: 24px;
    height: 24px;
}

/* small running marker under a taskbar icon */
.has-dot::after {
    content: "";
    position: absolute;
    left: 19px;
    bottom: 1px;
    width: 6px;
    height: 3px;
    border-radius: 2px;
    background: #8b8f94;
}

.dot-red::after {
    background: #c42b1c;
}

.dot-active::after {
    left: 14px;
    width: 16px;
    background: #0a78d0;
}

.tile-edge {
    background: #fde9e8;
    border-radius: 4px;
}

.tile-active {
    background: #f8f9fb;
    border: 1px solid #e3e6ea;
    border-radius: 4px;
    width: 38px;
    margin: 0 3px;
}

.tile-active::after {
    left: 10px;
}

.badge {
    position: absolute;
    top: 5px;
    left: 24px;
    width: 15px;
    height: 15px;
    border-radius: 50%;
    font-size: 9px;
    font-weight: 600;
    line-height: 15px;
    text-align: center;
    color: #fff;
}

.badge-m {
    background: #e8501f;
}

.badge-a {
    background: #0b4f8a;
}

.badge-user {
    left: 20px;
    background: #cfd2d6;
    display: flex;
    align-items: center;
    justify-content: center;
}

.badge-user svg {
    width: 11px;
    height: 11px;
}

.office-text {
    font-family: "Liberation Sans", sans-serif;
    font-size: 11px;
    font-weight: 700;
    fill: #fff;
}

.tray {
    flex: 1;
    display: flex;
    align-items: center;
    padding-left: 59px;
}

.tray-up {
    width: 12px;
    height: 8px;
}

.tray-cloud {
    width: 18px;
    height: 16px;
    margin-left: 18px;
}

.tray-wifi {
    width: 16px;
    height: 12px;
    margin-left: 14px;
}

.tray-vol {
    width: 16px;
    height: 12px;
    margin-left: 7px;
}

.tray-bat {
    width: 16px;
    height: 10px;
    margin-left: 9px;
}

.clock {
    width: 78px;
    display: flex;
    flex-direction: column;
    align-items: flex-end;
    font-size: 11.7px;
    line-height: 18px;
    color: #222;
}

.notif {
    width: 16px;
    height: 16px;
    margin-left: 7px;
    border-radius: 50%;
    background: #0a66c2;
    color: #fff;
    font-size: 10px;
    font-weight: 700;
    text-align: center;
    line-height: 16px;
}
```
